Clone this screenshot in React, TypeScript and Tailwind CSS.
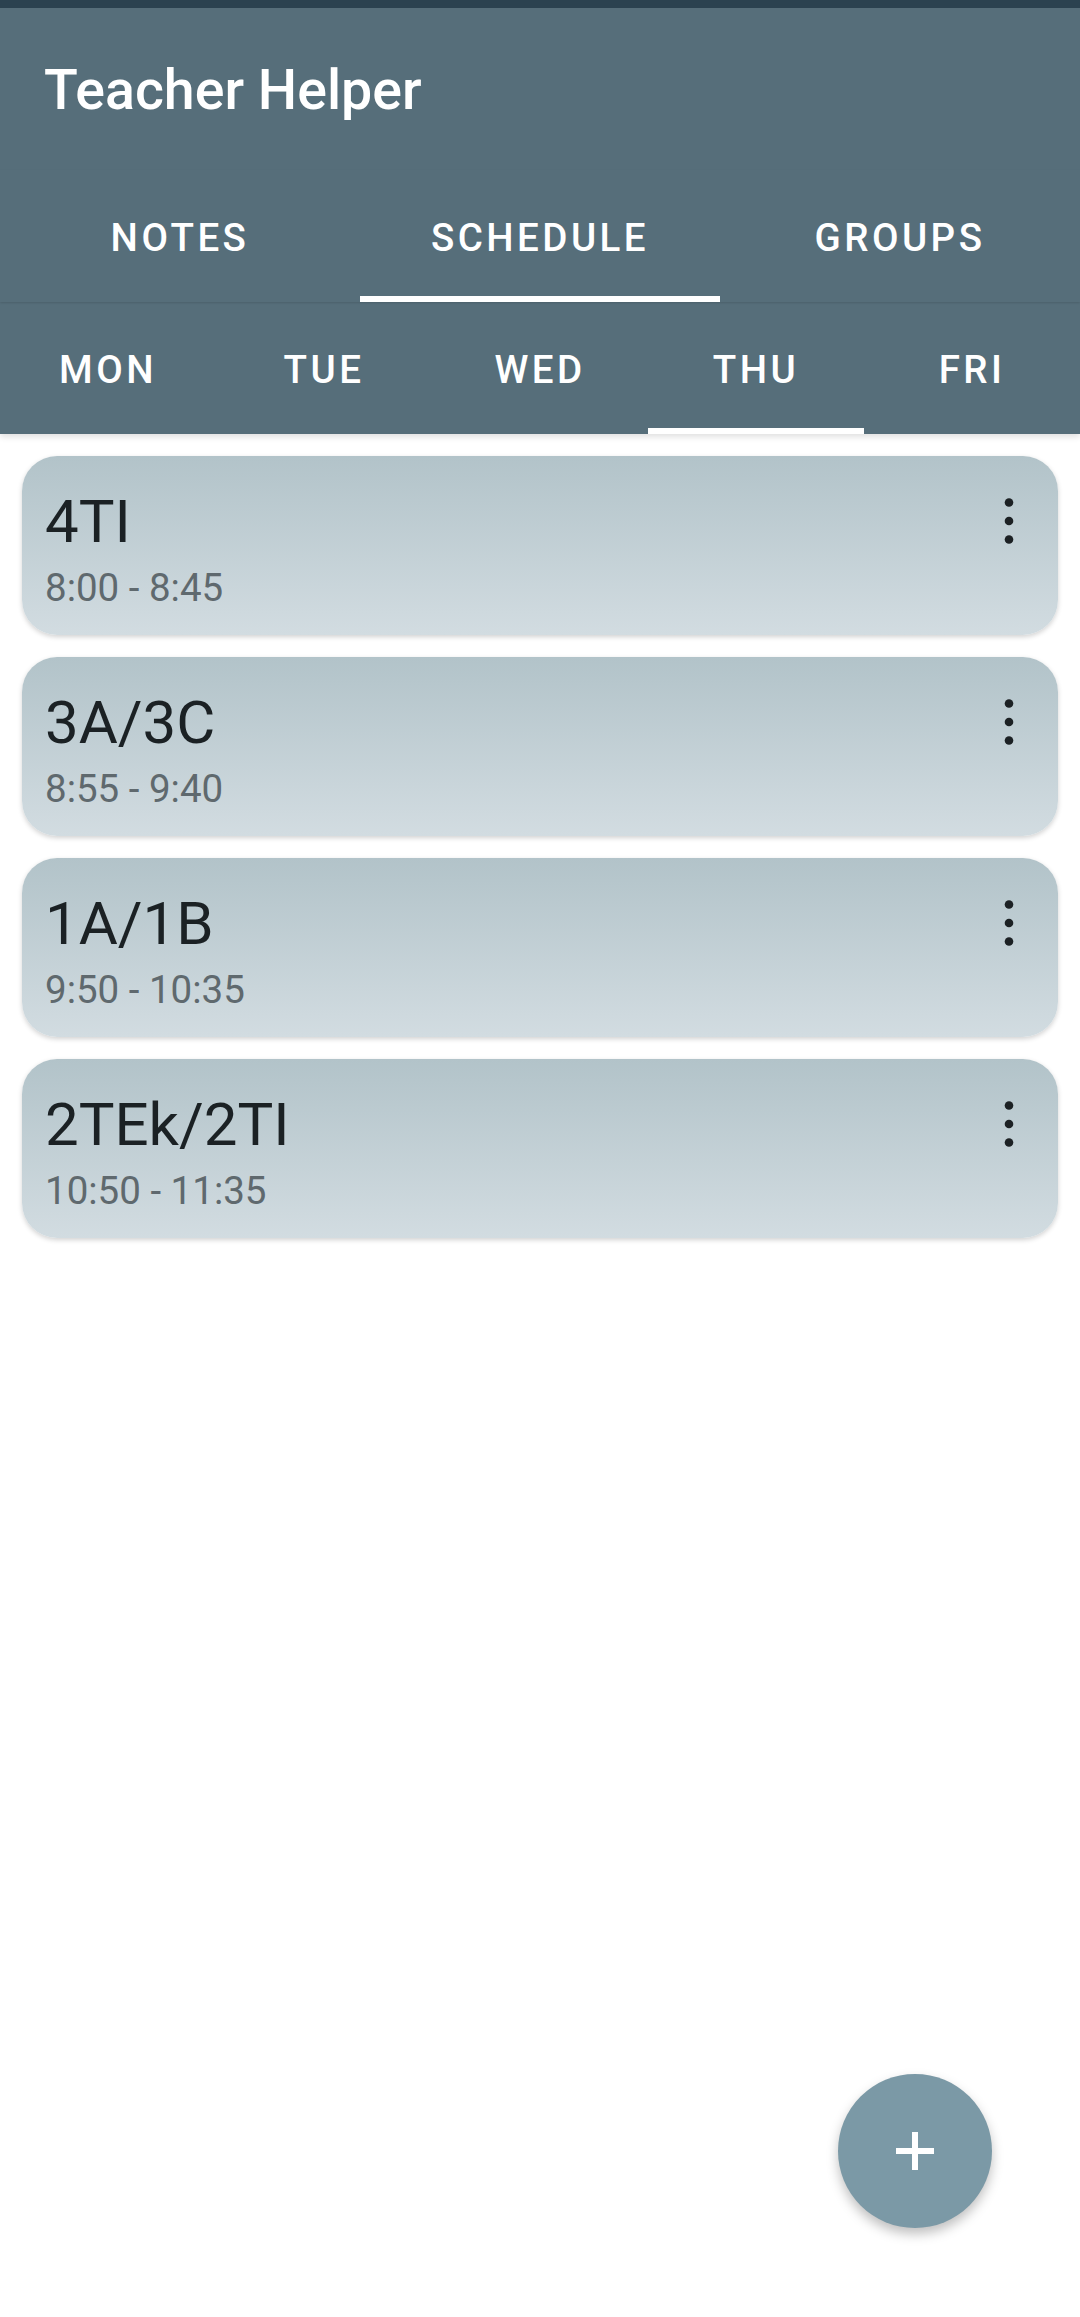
import { useState } from "react";

const mainTabs = ["NOTES", "SCHEDULE", "GROUPS"];
const days = ["MON", "TUE", "WED", "THU", "FRI"];

const lessons = [
  { name: "4TI", time: "8:00 - 8:45" },
  { name: "3A/3C", time: "8:55 - 9:40" },
  { name: "1A/1B", time: "9:50 - 10:35" },
  { name: "2TEk/2TI", time: "10:50 - 11:35" },
];

function MoreIcon() {
  return (
    <svg width="20" height="56" viewBox="0 0 20 56" className="shrink-0">
      <circle cx="10" cy="9.5" r="4.3" fill="#1c2124" />
      <circle cx="10" cy="28" r="4.3" fill="#1c2124" />
      <circle cx="10" cy="46.5" r="4.3" fill="#1c2124" />
    </svg>
  );
}

function LessonCard({ name, time }: { name: string; time: string }) {
  return (
    <div className="flex justify-between rounded-[35px] bg-gradient-to-b from-[#b2c3c9] to-[#d2dce1] pl-[23px] pr-[39px] pt-[36px] pb-[27px] shadow-[0_2px_5px_rgba(0,0,0,0.18)]">
      <div className="flex flex-col">
        <div className="text-[60px] leading-[60px] text-[#1b2124]">{name}</div>
        <div className="mt-[16px] text-[38.5px] leading-[40px] text-[#5f696e]">{time}</div>
      </div>
      <div className="pt-[0.5px]">
        <MoreIcon />
      </div>
    </div>
  );
}

export default function App() {
  const [tab, setTab] = useState(1);
  const [day, setDay] = useState(3);

  return (
    <div
      className="relative min-h-[2317px] w-[1080px] bg-white"
      style={{ fontFamily: "Roboto, 'Noto Sans', sans-serif" }}
    >
      {/* app bar */}
      <header className="relative z-10 bg-[#566e7a] shadow-[0_3px_6px_rgba(0,0,0,0.12)]">
        <div className="h-[8px] bg-[#2b4250]" />
        <div className="flex h-[162px] items-center pl-[44px] pt-[4px]">
          <h1 className="text-[55.5px] font-medium leading-none text-white">Teacher Helper</h1>
        </div>
        <nav className="relative z-10 flex h-[132px] shadow-[0_1px_2px_rgba(0,0,0,0.12)]">
          {mainTabs.map((t, i) => (
            <button
              key={t}
              onClick={() => setTab(i)}
              className="relative flex flex-1 items-center justify-center pt-[3px] text-[38.5px] font-medium tracking-[0.09em] text-white"
            >
              {t}
              {tab === i && <span className="absolute bottom-0 left-0 right-0 h-[6px] bg-white" />}
            </button>
          ))}
        </nav>
        <nav className="flex h-[132px]">
          {days.map((d, i) => (
            <button
              key={d}
              onClick={() => setDay(i)}
              className="relative flex flex-1 items-center justify-center pt-[3px] text-[38.5px] font-medium tracking-[0.09em] text-white"
            >
              {d}
              {day === i && <span className="absolute bottom-0 left-0 right-0 h-[6px] bg-white" />}
            </button>
          ))}
        </nav>
      </header>

      {/* lessons */}
      <main className="flex flex-col gap-[22px] px-[22px] pt-[22px]">
        {lessons.map((l) => (
          <LessonCard key={l.name} name={l.name} time={l.time} />
        ))}
      </main>

      {/* add button */}
      <button className="absolute bottom-[89px] right-[88px] flex h-[154px] w-[154px] items-center justify-center rounded-full bg-[#7b99a6] shadow-[0_6px_12px_rgba(0,0,0,0.25)]">
        <svg width="38" height="38" viewBox="0 0 38 38">
          <rect x="16" y="0" width="6" height="38" fill="white" />
          <rect x="0" y="16" width="38" height="6" fill="white" />
        </svg>
      </button>
    </div>
  );
}
